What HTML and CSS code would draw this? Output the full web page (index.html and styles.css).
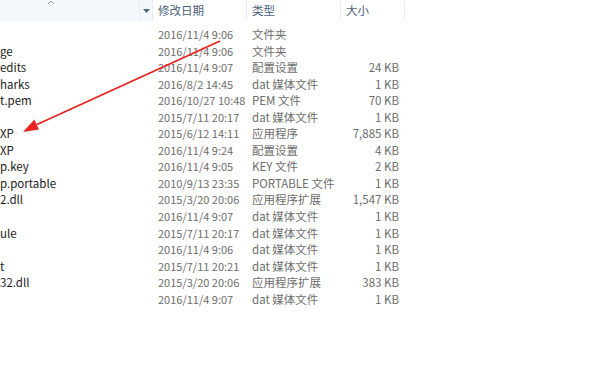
FILE: index.html
```html
<!DOCTYPE html>
<html lang="zh-CN">
<head>
  <meta charset="UTF-8" />
  <title>文件列表</title>
  <link rel="stylesheet" href="styles.css">
</head>
<body>

<div class="explorer">
  <!-- Column headers -->
  <div class="header">
    <div class="head name-head">
      <svg class="sort-up" width="8" height="5" viewBox="0 0 8 5"><path d="M1 4 L4 1 L7 4" fill="none" stroke="#8a9bb0" stroke-width="1"/></svg>
      <div class="drop">
        <svg width="7" height="4" viewBox="0 0 7 4"><path d="M0 0 L7 0 L3.5 4 Z" fill="#56657a"/></svg>
      </div>
    </div>
    <div class="head">修改日期</div>
    <div class="head">类型</div>
    <div class="head">大小</div>
  </div>

  <!-- File rows -->
  <div class="rows">
    <div class="row"><span class="name"></span><span class="date">2016/11/4 9:06</span><span class="type">文件夹</span><span class="size"></span></div>
    <div class="row"><span class="name">ge</span><span class="date">2016/11/4 9:06</span><span class="type">文件夹</span><span class="size"></span></div>
    <div class="row"><span class="name">edits</span><span class="date">2016/11/4 9:07</span><span class="type">配置设置</span><span class="size">24 KB</span></div>
    <div class="row"><span class="name">harks</span><span class="date">2016/8/2 14:45</span><span class="type">dat 媒体文件</span><span class="size">1 KB</span></div>
    <div class="row"><span class="name">t.pem</span><span class="date">2016/10/27 10:48</span><span class="type">PEM 文件</span><span class="size">70 KB</span></div>
    <div class="row"><span class="name"></span><span class="date">2015/7/11 20:17</span><span class="type">dat 媒体文件</span><span class="size">1 KB</span></div>
    <div class="row"><span class="name">XP</span><span class="date">2015/6/12 14:11</span><span class="type">应用程序</span><span class="size">7,885 KB</span></div>
    <div class="row"><span class="name">XP</span><span class="date">2016/11/4 9:24</span><span class="type">配置设置</span><span class="size">4 KB</span></div>
    <div class="row"><span class="name">p.key</span><span class="date">2016/11/4 9:05</span><span class="type">KEY 文件</span><span class="size">2 KB</span></div>
    <div class="row"><span class="name">p.portable</span><span class="date">2010/9/13 23:35</span><span class="type">PORTABLE 文件</span><span class="size">1 KB</span></div>
    <div class="row"><span class="name">2.dll</span><span class="date">2015/3/20 20:06</span><span class="type">应用程序扩展</span><span class="size">1,547 KB</span></div>
    <div class="row"><span class="name"></span><span class="date">2016/11/4 9:07</span><span class="type">dat 媒体文件</span><span class="size">1 KB</span></div>
    <div class="row"><span class="name">ule</span><span class="date">2015/7/11 20:17</span><span class="type">dat 媒体文件</span><span class="size">1 KB</span></div>
    <div class="row"><span class="name"></span><span class="date">2016/11/4 9:06</span><span class="type">dat 媒体文件</span><span class="size">1 KB</span></div>
    <div class="row"><span class="name">t</span><span class="date">2015/7/11 20:21</span><span class="type">dat 媒体文件</span><span class="size">1 KB</span></div>
    <div class="row"><span class="name">32.dll</span><span class="date">2015/3/20 20:06</span><span class="type">应用程序扩展</span><span class="size">383 KB</span></div>
    <div class="row"><span class="name"></span><span class="date">2016/11/4 9:07</span><span class="type">dat 媒体文件</span><span class="size">1 KB</span></div>
  </div>

  <!-- Red annotation arrow -->
  <svg class="arrow" width="616" height="380" viewBox="0 0 616 380">
    <line x1="220" y1="41" x2="37" y2="124.5" stroke="#e8231f" stroke-width="1.8"/>
    <polygon points="23,132 39,129.6 34.4,119.6" fill="#e8231f"/>
  </svg>
</div>

</body>
</html>
```

FILE: styles.css
```css
body {
  margin: 0;
  background: #fff;
  font-family: "Noto Sans CJK SC", "Noto Sans", sans-serif;
  font-size: 11.5px;
}
.explorer {
  position: relative;
  width: 616px;
  height: 380px;
  overflow: hidden;
}
.header {
  display: grid;
  grid-template-columns: 153px 94px 94px 64px;
  height: 21px;
}
.head {
  display: flex;
  align-items: center;
  padding-left: 5px;
  color: #4c607a;
  border-right: 1px solid #e6ebf2;
  margin: 1px 0 2px;
}
.name-head {
  position: relative;
  background: #f3f8fd;
  margin: 0;
  padding: 0;
  justify-content: flex-end;
  border-right: 1px solid #e4ebf3;
}
.sort-up {
  position: absolute;
  left: 47px;
  top: 0;
}
.drop {
  width: 12px;
  height: 100%;
  display: flex;
  align-items: center;
  justify-content: center;
  border-left: 1px solid #e4ebf3;
}
.rows {
  padding-top: 5px;
}
.row {
  display: grid;
  grid-template-columns: 153px 94px 94px 64px;
  height: 16.56px;
  line-height: 16.56px;
  white-space: nowrap;
}
.name {
  color: #1c1c1c;
}
.date, .type {
  padding-left: 5px;
  color: #6d6d6d;
}
.date {
  font-size: 11px;
}
.size {
  text-align: right;
  padding-right: 6px;
  color: #6d6d6d;
}
.arrow {
  position: absolute;
  left: 0;
  top: 0;
}
```
